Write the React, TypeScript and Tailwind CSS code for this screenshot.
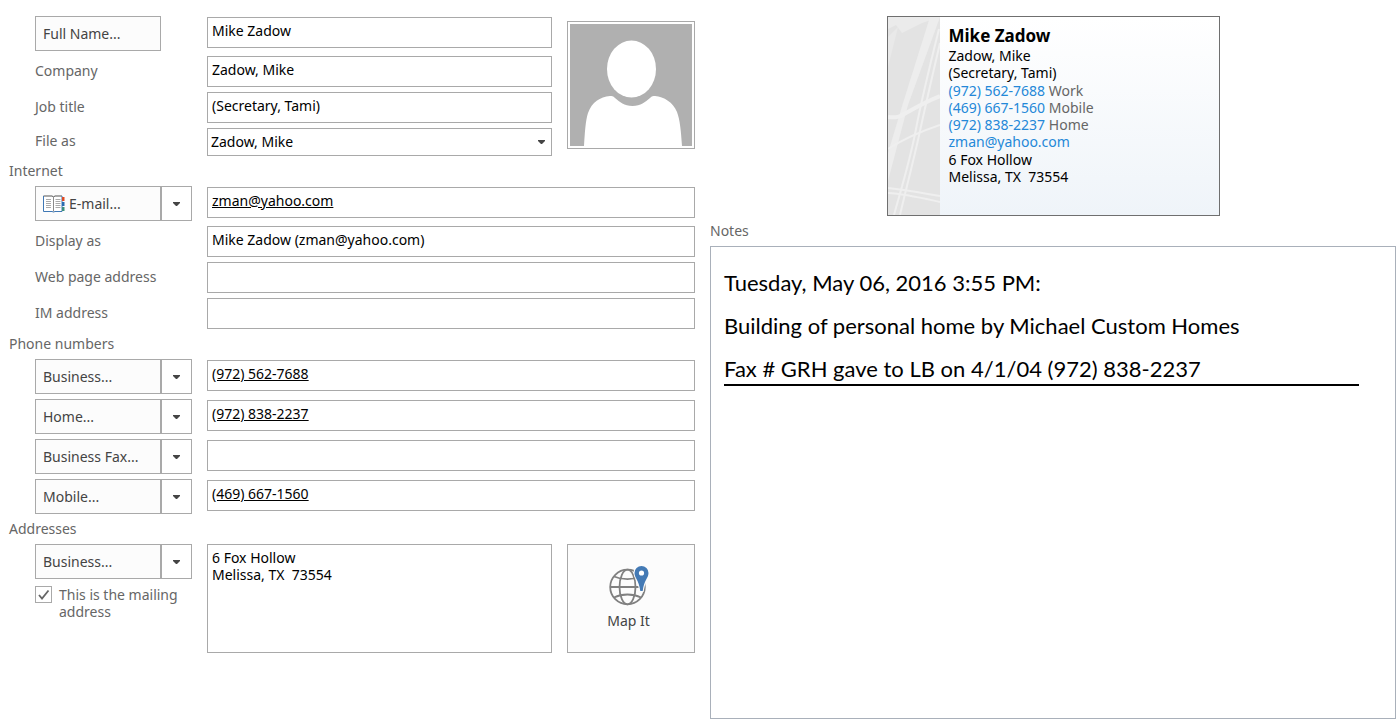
import React from 'react';

interface FieldProps {
  id: string;
  label: string;
  value?: string;
  linked?: boolean;
}

interface SplitFieldProps extends FieldProps {
  icon?: React.ReactNode;
}

const inputClass =
  'h-[31px] w-full min-w-0 flex-1 border border-[#a9a9a9] bg-white px-1 pb-[5px] text-black outline-none';

const Caret: React.FC = () => (
  <svg width="7" height="4" viewBox="0 0 7 4" aria-hidden="true">
    <path d="M0 0h7v1L4 4H3L0 1z" fill="#444" />
  </svg>
);

const AddressBookIcon: React.FC = () => (
  <svg width="22" height="18" viewBox="0 0 22 18" aria-hidden="true">
    <path d="M1 1h8l1.500.8L12 1h7v15H1z" fill="#fff" />
    <path d="M.5 1h8.500l1.500.8L12 1h7" fill="none" stroke="#555" />
    <path d="M.5 1v15.500H9l1.500.5 1.500-.5h7V1" fill="none" stroke="#3f78b5" />
    <path d="M10.500 2v14.500" stroke="#8a8a8a" />
    <path
      d="M3 4.500h5M3 6.500h5M3 8.500h5M3 10.500h5M3 12.500h5M12.500 4.500h5M12.500 6.500h5M12.500 8.500h5M12.500 10.500h5M12.500 12.500h5"
      stroke="#aaa"
    />
    <path d="M19 2h2.500v4H19z" fill="#e04a22" />
    <path d="M19 7h2.500v4H19z" fill="#2b6cb0" />
    <path d="M19 12h2.500v4H19z" fill="#3b8f7c" />
  </svg>
);

const GlobeIcon: React.FC = () => (
  <svg width="40" height="40" viewBox="0 0 40 40" aria-hidden="true">
    <g fill="none" stroke="#808080" strokeWidth="1.800">
      <circle cx="18.500" cy="21" r="17.300" />
      <ellipse cx="18.500" cy="21" rx="8" ry="17.300" />
      <path d="M1 21h35M5 10.500c8 3.500 19 3.500 27 0M5 31.500c8-4 19-4 27 0" />
    </g>
    <path
      d="M32.500 0a7 7 0 0 1 7 7c0 5-4.500 7-5.800 18h-2.400c-1.300-11-5.800-13-5.800-18a7 7 0 0 1 7-7z"
      fill="#447ab5"
      stroke="#fcfcfc"
      strokeWidth="2"
      paintOrder="stroke"
    />
    <circle cx="32.500" cy="7" r="2.600" fill="#fff" />
  </svg>
);

const SectionTitle: React.FC<{ children: React.ReactNode }> = ({ children }) => (
  <h2 className="flex h-[30px] items-center">{children}</h2>
);

const Field: React.FC<FieldProps> = ({ id, label, value = '' }) => (
  <div className="flex items-center gap-[15px]">
    <label htmlFor={id} className="w-[157px] shrink-0 pb-[2px]">
      {label}
    </label>
    <input id={id} type="text" defaultValue={value} className={inputClass} />
  </div>
);

const SplitButton: React.FC<{ label: string; icon?: React.ReactNode }> = ({ label, icon }) => (
  <div className="flex h-[35px] w-[157px] shrink-0 text-[#444]">
    <button
      type="button"
      className="flex w-[126px] items-center gap-1 border border-[#a9a9a9] bg-[#fcfcfc] px-[7px]"
    >
      {icon}
      {label}
    </button>
    <button
      type="button"
      aria-label={`Choose ${label}`}
      className="flex flex-1 items-center justify-center border border-[#a9a9a9] bg-white"
    >
      <Caret />
    </button>
  </div>
);

const SplitField: React.FC<SplitFieldProps> = ({ id, label, value = '', linked, icon }) => (
  <div className="flex items-start gap-[15px]">
    <SplitButton label={label} icon={icon} />
    <input
      id={id}
      type="text"
      aria-label={label}
      defaultValue={value}
      className={`${inputClass} mt-px ${linked ? 'underline' : ''}`}
    />
  </div>
);

const ContactPhoto: React.FC = () => (
  <div className="mt-[5px] h-32 w-32 shrink-0 border border-[#a9a9a9] p-[2px]">
    <svg viewBox="0 0 122 122" className="h-full w-full" role="img" aria-label="Contact photo">
      <path d="M0 0h122v122H0z" fill="#b0b0b0" />
      <ellipse cx="61.500" cy="45" rx="24.500" ry="28.500" fill="#fff" />
      <path
        d="M14 122c1-15 1.500-25 4-33 4-11 12-16 22-17 2 0 3 0 5 2 5 4 9 8 17.500 8S75 78 80 74c2-2 3-2 5-2 9 1 18 6 22 16 3 8 4 19 5 34z"
        fill="#fff"
      />
    </svg>
  </div>
);

const phones = [
  { number: '(972) 562-7688', kind: 'Work' },
  { number: '(469) 667-1560', kind: 'Mobile' },
  { number: '(972) 838-2237', kind: 'Home' },
];

const BusinessCard: React.FC = () => (
  <article className="mx-auto flex h-[200px] w-[333px] border border-[#6f6f6f] bg-linear-to-b from-white to-[#eff4f9] leading-[17px] text-black">
    <svg
      viewBox="0 0 52 198"
      preserveAspectRatio="none"
      className="h-full w-[52px] shrink-0"
      aria-hidden="true"
    >
      <path d="M0 0h52v198H0z" fill="#e3e3e3" />
      <path d="M0 0h52L34 6 14 16 8 8 0 12z" fill="#ebebeb" />
      <path d="M42 0h10L20 88 0 164v-28l15-50z" fill="#ededed" />
      <path d="M10 10L0 50V20z" fill="#e9e9e9" />
      <g fill="none" stroke="#efefef">
        <path d="M51 12C42 48 34 80 28 112S12 176 6 198" strokeWidth="2" />
        <path d="M52 26C45 56 38 86 32 114S18 172 12 198" strokeWidth="2" />
        <path d="M0 100c8 1 12 0 18-4 12-7 24-13 34-17" strokeWidth="4" />
        <path d="M0 132c14-9 34-18 52-24" strokeWidth="2" />
        <path d="M0 171c18 2 34 5 52 8M0 176c18 1 34 5 52 9" strokeWidth="2" />
      </g>
    </svg>
    <div className="flex flex-col px-[9px] pt-[9px]">
      <h1 className="mb-px text-[17px] leading-5 font-bold">Mike Zadow</h1>
      <p>Zadow, Mike</p>
      <p className="mb-px">(Secretary, Tami)</p>
      {phones.map((phone) => (
        <p key={phone.kind} className="text-[#666]">
          <a href="#call" className="text-[#2488d8]">
            {phone.number}
          </a>{' '}
          {phone.kind}
        </p>
      ))}
      <p className="mb-px">
        <a href="#mail" className="text-[#2488d8]">
          zman@yahoo.com
        </a>
      </p>
      <address className="whitespace-pre-line not-italic">
        6 Fox Hollow{'\n'}Melissa, TX&nbsp; 73554
      </address>
    </div>
  </article>
);

const App: React.FC = () => {
  return (
    <main className="grid min-h-screen grid-cols-2 gap-[15px] bg-white pt-4 pr-1 pb-[5px] pl-[9px] font-['Noto_Sans',sans-serif] text-sm text-[#666]">
      <form>
        <section className="flex gap-[15px] pl-[26px]">
          <div className="flex min-w-0 flex-1 flex-col gap-[5px]">
            <div className="flex items-start gap-[46px]">
              <button
                type="button"
                className="h-[35px] w-[126px] shrink-0 border border-[#a9a9a9] bg-[#fcfcfc] px-[7px] text-left text-[#444]"
              >
                Full Name...
              </button>
              <input
                type="text"
                aria-label="Full Name"
                defaultValue="Mike Zadow"
                className={`${inputClass} mt-px`}
              />
            </div>
            <Field id="company" label="Company" value="Zadow, Mike" />
            <Field id="job" label="Job title" value="(Secretary, Tami)" />
            <div className="flex items-center gap-[15px]">
              <label htmlFor="file-as" className="w-[157px] shrink-0 pb-[2px]">
                File as
              </label>
              <div className="relative flex flex-1">
                <select
                  id="file-as"
                  className="h-7 w-full appearance-none border border-[#a9a9a9] bg-white px-[3px] text-black outline-none"
                >
                  <option>Zadow, Mike</option>
                </select>
                <span className="pointer-events-none absolute inset-y-0 right-[7px] flex items-center">
                  <Caret />
                </span>
              </div>
            </div>
          </div>
          <ContactPhoto />
        </section>

        <SectionTitle>Internet</SectionTitle>
        <section className="flex flex-col gap-[5px] pl-[26px]">
          <SplitField
            id="email"
            label="E-mail..."
            value="zman@yahoo.com"
            linked
            icon={<AddressBookIcon />}
          />
          <Field id="display" label="Display as" value="Mike Zadow (zman@yahoo.com)" />
          <Field id="web" label="Web page address" />
          <Field id="im" label="IM address" />
        </section>

        <SectionTitle>Phone numbers</SectionTitle>
        <section className="flex flex-col gap-[5px] pl-[26px]">
          <SplitField id="business" label="Business..." value="(972) 562-7688" linked />
          <SplitField id="home" label="Home..." value="(972) 838-2237" linked />
          <SplitField id="fax" label="Business Fax..." />
          <SplitField id="mobile" label="Mobile..." value="(469) 667-1560" linked />
        </section>

        <SectionTitle>Addresses</SectionTitle>
        <section className="flex h-[109px] gap-[15px] pl-[26px]">
          <div className="w-[157px] shrink-0">
            <SplitButton label="Business..." />
            <label className="mt-[7px] flex gap-[7px] leading-[17px]">
              <span className="relative flex h-[17px] w-[17px] shrink-0">
                <input
                  type="checkbox"
                  defaultChecked
                  className="peer h-full w-full appearance-none border border-[#a9a9a9] bg-white"
                />
                <svg
                  viewBox="0 0 17 17"
                  className="pointer-events-none absolute inset-0 hidden peer-checked:block"
                  aria-hidden="true"
                >
                  <path d="M4 9l3 3.500L13.500 4.500" fill="none" stroke="#666" strokeWidth="1.800" />
                </svg>
              </span>
              This is the mailing address
            </label>
          </div>
          <textarea
            aria-label="Business address"
            defaultValue={'6 Fox Hollow\nMelissa, TX  73554'}
            className="min-w-0 flex-1 resize-none border border-[#a9a9a9] bg-white px-1 py-1 leading-[17px] text-black outline-none"
          />
          <button
            type="button"
            className="flex w-32 shrink-0 flex-col items-center justify-center gap-[5px] border border-[#a9a9a9] bg-[#fcfcfc] pr-[5px] text-[#444]"
          >
            <GlobeIcon />
            Map It
          </button>
        </section>
      </form>

      <section className="flex flex-col">
        <BusinessCard />
        <SectionTitle>Notes</SectionTitle>
        <div
          role="textbox"
          aria-label="Notes"
          aria-multiline="true"
          className="flex-1 border border-[#a9b0ba] pt-[14px] pr-9 pl-[13px] font-[Lato,sans-serif] text-[22px] leading-[43px] text-black"
        >
          <p>Tuesday, May 06, 2016 3:55 PM:</p>
          <p>Building of personal home by Michael Custom Homes</p>
          <p className="mt-[6px] border-b-2 border-black leading-[31px]">
            Fax # GRH gave to LB on 4/1/04 (972) 838-2237
          </p>
        </div>
      </section>
    </main>
  );
};

export default App;
